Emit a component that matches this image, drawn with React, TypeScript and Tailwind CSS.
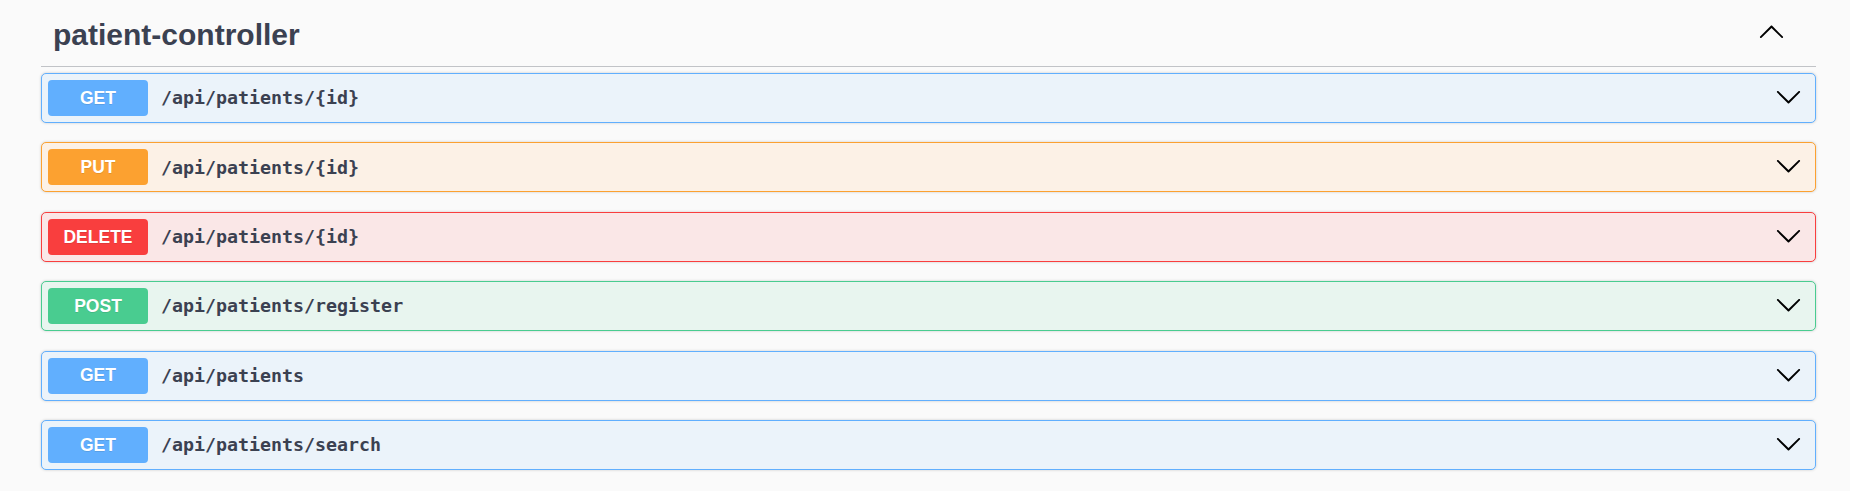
import React from 'react'

type Method = 'GET' | 'PUT' | 'DELETE' | 'POST'

const styles: Record<Method, { row: string; badge: string }> = {
  GET: { row: 'bg-[#ebf3fa] border-[#61affe]', badge: 'bg-[#61affe]' },
  PUT: { row: 'bg-[#fcf1e6] border-[#fca130]', badge: 'bg-[#fca130]' },
  DELETE: { row: 'bg-[#fae7e7] border-[#f93e3e]', badge: 'bg-[#f93e3e]' },
  POST: { row: 'bg-[#e8f5ef] border-[#49cc90]', badge: 'bg-[#49cc90]' },
}

const ops: { method: Method; path: string }[] = [
  { method: 'GET', path: '/api/patients/{id}' },
  { method: 'PUT', path: '/api/patients/{id}' },
  { method: 'DELETE', path: '/api/patients/{id}' },
  { method: 'POST', path: '/api/patients/register' },
  { method: 'GET', path: '/api/patients' },
  { method: 'GET', path: '/api/patients/search' },
]

function Chevron({ up = false }: { up?: boolean }) {
  return (
    <svg
      width="27"
      height="27"
      viewBox="0 0 20 20"
      className={up ? 'rotate-180' : ''}
      fill="#000"
    >
      <path d="M17.418 6.109c.272-.268.709-.268.979 0s.271.701 0 .969l-7.908 7.83c-.27.268-.707.268-.979 0l-7.908-7.83c-.27-.268-.27-.701 0-.969.271-.268.709-.268.979 0L10 13.25l7.418-7.141z" />
    </svg>
  )
}

function OpBlock({ method, path }: { method: Method; path: string }) {
  const s = styles[method]
  return (
    <div
      className={`flex items-center h-[50px] px-[6px] border rounded-[5px] shadow-[0_0_3px_rgba(0,0,0,0.19)] ${s.row}`}
    >
      <div
        className={`flex items-center justify-center w-[100px] h-[36px] rounded-[4px] text-white font-bold text-[17.5px] [text-shadow:0_1px_0_rgba(0,0,0,0.1)] ${s.badge}`}
        style={{ fontFamily: '"Liberation Sans", Arial, sans-serif' }}
      >
        {method}
      </div>
      <div
        className="flex-1 pl-[13px] text-[18.3px] font-semibold text-[#3b4151]"
        style={{ fontFamily: '"DejaVu Sans Mono", monospace' }}
      >
        {path}
      </div>
      <div className="mr-[7px] -mt-[3px] flex items-center">
        <Chevron />
      </div>
    </div>
  )
}

export default function App() {
  return (
    <div className="min-h-screen bg-[#fafafa] pl-[41px]">
      <div className="w-[1775px]">
        <div className="flex items-start justify-between h-[67px] pt-[18px] pl-[12px] pr-[31px] border-b border-[#c1c3c7]">
          <h3
            className="text-[30px] leading-[34.5px] font-bold text-[#3b4151]"
            style={{ fontFamily: '"Liberation Sans", Arial, sans-serif' }}
          >
            patient-controller
          </h3>
          <div className="mt-[1px]">
            <Chevron up />
          </div>
        </div>
        <div className="flex flex-col gap-[19.4px] mt-[6px]">
          {ops.map((op, i) => (
            <OpBlock key={i} method={op.method} path={op.path} />
          ))}
        </div>
      </div>
    </div>
  )
}
